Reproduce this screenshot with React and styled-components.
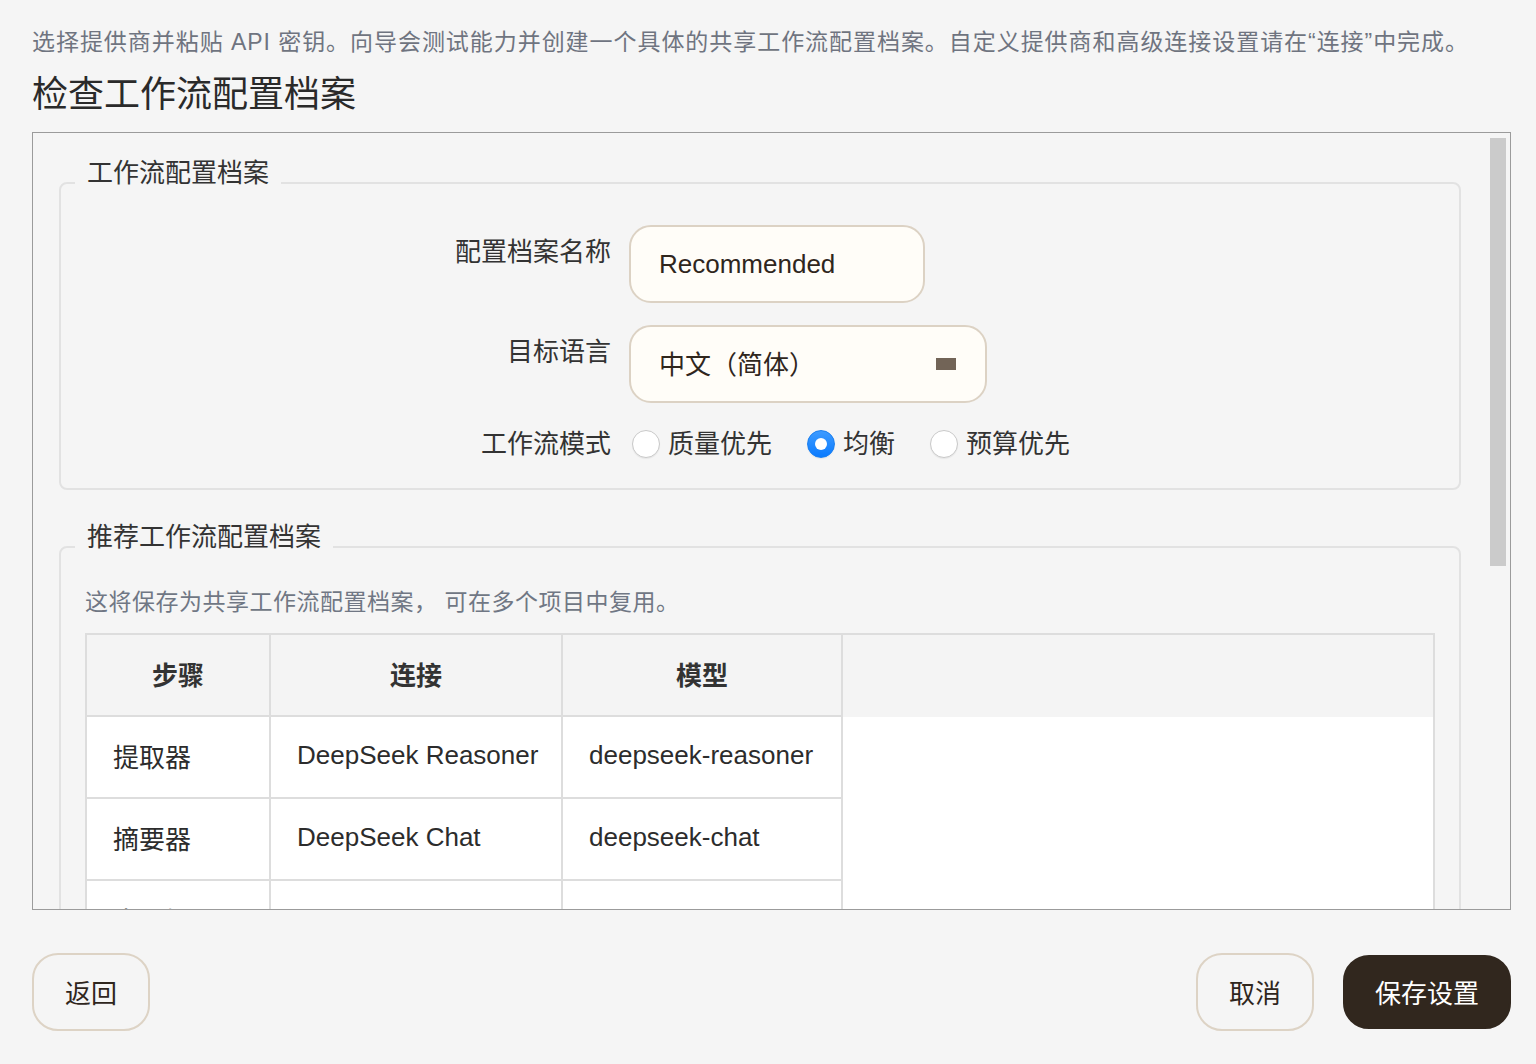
import React from 'react';
import styled, { createGlobalStyle } from 'styled-components';

const GlobalStyle = createGlobalStyle`
  * { box-sizing: border-box; }
  html, body {
    margin: 0;
    padding: 0;
    background: #f5f5f5;
  }
  body {
    font-family: "Liberation Sans", "Noto Sans CJK SC", sans-serif;
    color: #2c2c2c;
  }
`;

const Page = styled.div`
  height: 1064px;
  padding: 27px 25px 0 32px;
  display: flex;
  flex-direction: column;
`;

const Intro = styled.p`
  margin: 0;
  font-size: 23px;
  line-height: 30px;
  letter-spacing: 0.95px;
  color: #6f7480;
  white-space: nowrap;
`;

const Title = styled.h1`
  margin: 14px 0 13px;
  font-size: 36px;
  line-height: 48px;
  font-weight: 400;
  color: #2a2a2a;
`;

const ScrollArea = styled.div`
  height: 778px;
  border: 1px solid #9b9b9b;
  display: flex;
`;

const Viewport = styled.div`
  flex: 1;
  min-width: 0;
  overflow: hidden;
  padding: 27px 27px 0 26px;
`;

const ScrollTrack = styled.div`
  width: 22px;
  flex-shrink: 0;
  padding: 5px 4px 0 2px;
`;

const ScrollThumb = styled.div`
  height: ${p => p.$length}px;
  background: #cbcbcb;
`;

const GroupBox = styled.fieldset`
  margin: 0;
  padding: 0;
  min-width: 0;
  border: 2px solid #e2e2e2;
  border-radius: 8px;

  & + & {
    margin-top: 34px;
  }
`;

const Legend = styled.legend`
  margin-left: 14px;
  padding: 0 12px 20px;
  font-size: 26px;
  line-height: 26px;
  color: #333;
`;

const Form = styled.div`
  display: grid;
  grid-template-columns: 550px auto;
  column-gap: 18px;
  row-gap: 22px;
  align-items: start;
  padding: 19px 0 25px;
`;

const FieldLabel = styled.label`
  text-align: right;
  font-size: 26px;
  line-height: 26px;
  color: #333;
  padding-top: ${p => (p.$center ? '0' : '14px')};
  align-self: ${p => (p.$center ? 'center' : 'start')};
`;

const TextInput = styled.input`
  width: 296px;
  height: 78px;
  padding: 0 28px;
  border: 2px solid #dcd2c4;
  border-radius: 22px;
  background: #fffdf8;
  font-family: inherit;
  font-size: 26px;
  color: #2f261d;
  outline: none;
`;

const ComboBox = styled.div`
  width: 358px;
  height: 78px;
  padding: 0 29px 4px 28px;
  border: 2px solid #dcd2c4;
  border-radius: 22px;
  background: #fffdf8;
  display: flex;
  align-items: center;
  justify-content: space-between;
  font-size: 26px;
  color: #2f261d;
`;

const ComboArrow = styled.span`
  width: 20px;
  height: 12px;
  margin-top: 4px;
  background: #726457;
`;

const RadioGroup = styled.div`
  min-height: 38px;
  padding-left: 3px;
  display: flex;
  align-items: center;
  gap: 35px;
`;

const RadioOption = styled.label`
  display: flex;
  align-items: center;
  gap: 8px;
  font-size: 26px;
  line-height: 26px;
  color: #333;
`;

const RadioDot = styled.span`
  width: 28px;
  height: 28px;
  border-radius: 50%;
  display: flex;
  align-items: center;
  justify-content: center;
  border: 1px solid ${p => (p.$checked ? '#1a7ff0' : '#c9c9c9')};
  background: ${p => (p.$checked ? 'linear-gradient(#3d9bff, #0a7bff)' : '#ffffff')};
  box-shadow: 0 1px 1px rgba(0, 0, 0, 0.06);

  &::after {
    content: '';
    display: ${p => (p.$checked ? 'block' : 'none')};
    width: 12px;
    height: 12px;
    border-radius: 50%;
    background: #ffffff;
  }
`;

const Description = styled.p`
  margin: 17px 24px 16px;
  font-size: 23px;
  line-height: 30px;
  letter-spacing: 0.5px;
  color: #707784;
`;

const TableFrame = styled.div`
  margin: 0 24px;
  border: 2px solid #dddddd;
  background: #ffffff;
  display: grid;
  grid-template-columns: 184px 292px 280px 1fr;
  grid-auto-rows: 82px;
`;

const HeadCell = styled.div`
  grid-column: ${p => p.$col};
  background: #f4f4f4;
  border-right: ${p => (p.$filler ? 'none' : '2px solid #dddddd')};
  border-bottom: ${p => (p.$filler ? 'none' : '2px solid #dddddd')};
  padding-bottom: 4px;
  display: flex;
  align-items: center;
  justify-content: center;
  font-size: 26px;
  font-weight: 700;
  color: #333;
`;

const Cell = styled.div`
  grid-column: ${p => p.$col};
  border-right: 2px solid #dddddd;
  border-bottom: 2px solid #dddddd;
  padding: 0 0 4px 26px;
  display: flex;
  align-items: center;
  font-size: 26px;
  color: #2c2c2c;
  white-space: nowrap;
`;

const Footer = styled.div`
  margin-top: 43px;
  display: flex;
  align-items: center;
  gap: 29px;
`;

const Spacer = styled.div`
  flex: 1;
`;

const Button = styled.button`
  width: ${p => (p.$primary ? '168px' : '118px')};
  height: ${p => (p.$primary ? '74px' : '78px')};
  padding-bottom: 3px;
  border: 2px solid ${p => (p.$primary ? '#31271e' : '#ddd3c5')};
  border-radius: 26px;
  background: ${p => (p.$primary ? '#31271e' : 'transparent')};
  color: ${p => (p.$primary ? '#ffffff' : '#2f261d')};
  font-family: inherit;
  font-size: 26px;
  cursor: pointer;
`;

const modes = [
  { label: '质量优先', checked: false },
  { label: '均衡', checked: true },
  { label: '预算优先', checked: false },
];

const steps = [
  ['提取器', 'DeepSeek Reasoner', 'deepseek-reasoner'],
  ['摘要器', 'DeepSeek Chat', 'deepseek-chat'],
  ['术语提取器', 'DeepSeek Chat', 'deepseek-chat'],
  ['翻译器', 'DeepSeek Reasoner', 'deepseek-reasoner'],
  ['审校器', 'DeepSeek Chat', 'deepseek-chat'],
];

export default function App() {
  return (
    <>
      <GlobalStyle />
      <Page>
        <Intro>
          选择提供商并粘贴 API 密钥。向导会测试能力并创建一个具体的共享工作流配置档案。自定义提供商和高级连接设置请在“连接”中完成。
        </Intro>
        <Title>检查工作流配置档案</Title>

        <ScrollArea>
          <Viewport>
            <GroupBox>
              <Legend>工作流配置档案</Legend>
              <Form>
                <FieldLabel>配置档案名称</FieldLabel>
                <TextInput defaultValue="Recommended" readOnly />

                <FieldLabel>目标语言</FieldLabel>
                <ComboBox>
                  <span>中文（简体）</span>
                  <ComboArrow />
                </ComboBox>

                <FieldLabel $center>工作流模式</FieldLabel>
                <RadioGroup>
                  {modes.map(m => (
                    <RadioOption key={m.label}>
                      <RadioDot $checked={m.checked} />
                      {m.label}
                    </RadioOption>
                  ))}
                </RadioGroup>
              </Form>
            </GroupBox>

            <GroupBox>
              <Legend>推荐工作流配置档案</Legend>
              <Description>这将保存为共享工作流配置档案， 可在多个项目中复用。</Description>
              <TableFrame>
                <HeadCell $col={1}>步骤</HeadCell>
                <HeadCell $col={2}>连接</HeadCell>
                <HeadCell $col={3}>模型</HeadCell>
                <HeadCell $col={4} $filler />
                {steps.map(row =>
                  row.map((text, i) => (
                    <Cell key={row[0] + i} $col={i + 1}>
                      {text}
                    </Cell>
                  ))
                )}
              </TableFrame>
            </GroupBox>
          </Viewport>
          <ScrollTrack>
            <ScrollThumb $length={428} />
          </ScrollTrack>
        </ScrollArea>

        <Footer>
          <Button>返回</Button>
          <Spacer />
          <Button>取消</Button>
          <Button $primary>保存设置</Button>
        </Footer>
      </Page>
    </>
  );
}
